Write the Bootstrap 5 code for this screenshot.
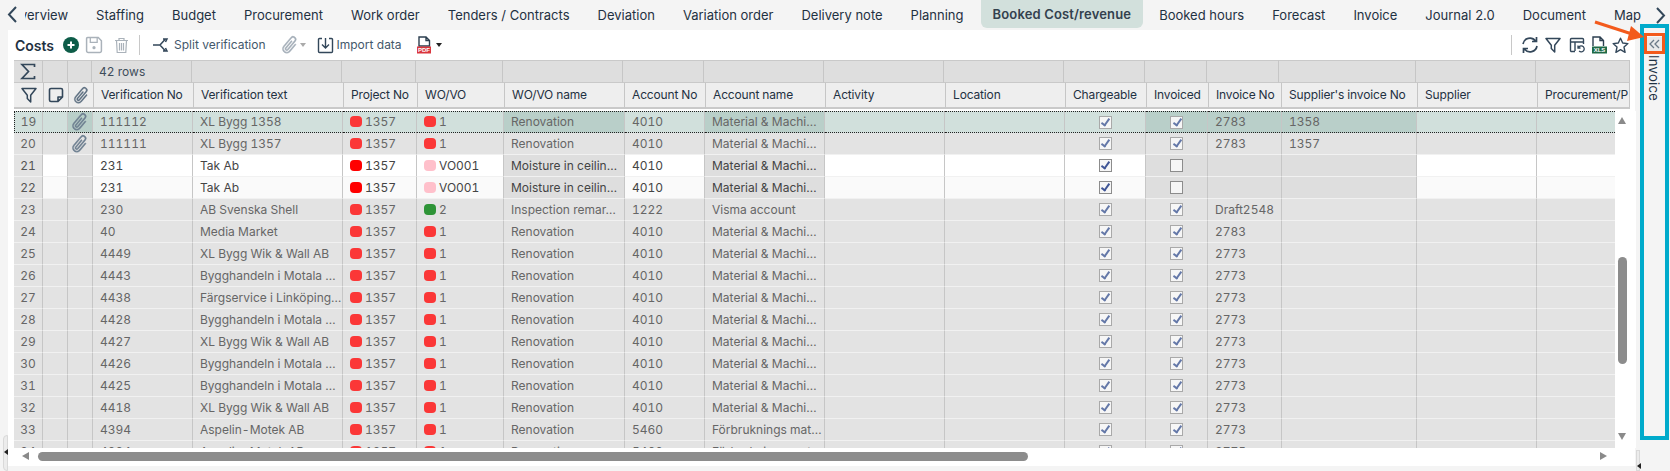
<!DOCTYPE html>
<html lang="en"><head><meta charset="utf-8"><title>Costs</title>
<link href="https://cdn.jsdelivr.net/npm/bootstrap@5.3.0/dist/css/bootstrap.min.css" rel="stylesheet">
<style>
html,body{width:1670px;height:471px;overflow:hidden;background:#f4f4f4;font-family:Inter,"Noto Sans",sans-serif;font-size:12px;color:#1f3142}
.topnav{height:30px}
.chev{width:25px;flex:none}
.navscroll{width:1627px;overflow:hidden;white-space:nowrap}
.navitem{font-size:13px;padding:0 14px;height:28px;line-height:30px;color:#1f3142;text-decoration:none;flex:none}
.navitem.first{margin-left:-29px}
.navitem.on{background:#d2e0dc;border-radius:0 0 6px 6px;font-weight:600;padding:0 12px;line-height:28px;color:#33414e;letter-spacing:.15px;margin:0 2px 0 3px}
.mainrow{height:441px}
.costpanel{width:1627px;height:436px;margin-left:8px;background:#fff;flex:none}
.tbar{height:30px;padding:0 6px 0 7px}
.tbar .ttl{font-size:14px;font-weight:600;color:#1f3142;margin-right:9px}
.tbtn{color:#43586b;font-size:12px;white-space:nowrap}
.vsep{width:1px;height:20px;background:#c8c8c8}
.caret-d{width:0;height:0;border-left:3px solid transparent;border-right:3px solid transparent;border-top:4px solid #222}
.caret-d.dim{border-top-color:#aaa}
.gap5{margin-left:5px}.gap6{margin-left:6px}.gap8{margin-left:8px}.gap10{margin-left:10px}.gap11{margin-left:11px}.gap13{margin-left:13px}.gap14{margin-left:14px}.gap19{margin-left:19px}
.gridwrap{margin-left:6px}
.dt{table-layout:fixed;border-collapse:separate;border-spacing:0;margin:0!important;color:#666}
.dt.sumt{width:1616px}.dt.hdrt{width:1616px}.dt.bodyt{width:1643px}
.dt>tbody>tr>td{padding:0 7px;white-space:nowrap;overflow:hidden;vertical-align:middle;font-size:12px;border:0;border-right:1px solid #c6c6c6;box-shadow:none;font-variant-numeric:tabular-nums}
.sumt>tbody>tr>td{height:23px;background:#dedede;border-top:1px solid #c9c9c9;border-bottom:1px solid #c9c9c9;color:#3e4d5b}
.hdrt>tbody>tr>td{height:26px;background:#eee;border-bottom:2px solid #c9c9c9;color:#1f3142;letter-spacing:-.15px}
.dt>tbody>tr>td.ic{padding:0;text-align:center;line-height:0}
.bodyclip{width:1601px;height:337px;overflow:hidden;margin-top:2px;flex:none}
.bodyt>tbody>tr>td{height:22px;border-bottom:1px solid #f1f1f1;background:#e3e3e3}
.bodyt>tbody>tr>td.num{padding:0;text-align:center;background:#e3e3e3}
.bodyt tr.sel>td{background:#d1e0dc;border-top:1px dotted #222;border-bottom:1px dotted #222}
.bodyt tr.sel>td.num{background:#d1e0dc;border-left:1px dotted #222}
.bodyt tr.sel>td.dk{background:#b9cfc9}
.bodyt tr.wh>td{background:#fff;color:#444}
.bodyt tr.off>td{background:#fafafa;color:#444}
.bodyt tr.wh>td.num,.bodyt tr.off>td.num{background:#e3e3e3;color:#555}
.bodyt tr.wh>td.dk,.bodyt tr.off>td.dk{background:#dedede}
.chip{display:inline-block;width:12px;height:11px;border-radius:4px;margin-right:3px;vertical-align:-1px;background:#fb3737}
.chip.rd{background:#f00}.chip.pk{background:#ffc0cb}.chip.gn{background:#2e9437}
.ck{display:inline-block;position:relative;width:13px;height:13px;border:1px solid #a9a9a9;background:#f6f6f6;vertical-align:middle}
.ck.on::after{content:"";position:absolute;left:3.5px;top:0;width:5px;height:9px;border-right:2px solid #6478a8;border-bottom:2px solid #6478a8;transform:rotate(35deg)}
tr.wh .ck,tr.off .ck{border-color:#8c8c8c}
tr.wh .ck.on::after,tr.off .ck.on::after{border-color:#3f5596}
.vtrack{width:21px;flex:none;height:337px;margin-top:2px;background:#fff}
.tri-u,.tri-d{width:0;height:0;border-left:4.5px solid transparent;border-right:4.5px solid transparent;margin-left:3px}
.tri-u{border-bottom:7px solid #8a8a8a;margin-top:6px}
.tri-d{border-top:7px solid #8a8a8a;margin-top:69px}
.vthumb{width:9px;height:107px;background:#8c8c8c;border-radius:5px;margin:133px 0 0 3px}
.hbar{height:16px;padding-left:8px}
.tri-l,.tri-r{width:0;height:0;border-top:4.5px solid transparent;border-bottom:4.5px solid transparent;flex:none}
.tri-l{border-right:7px solid #8a8a8a;margin-right:9px}
.tri-r{border-left:7px solid #8a8a8a;margin-left:572px}
.hthumb{width:990px;height:9px;background:#8c8c8c;border-radius:5px;flex:none}
.sidepane{width:30px;margin-left:5px;flex:none}
.collapser{width:17px;height:16px;margin:6px 0 0 6px;background:#e9e9e9;border:1px solid #f8f8f8}
.sidelabel{writing-mode:vertical-rl;font-size:13px;line-height:17px;margin:3px 0 0 5px;color:#1f3142;letter-spacing:.3px}
.hl-cyan{position:absolute;left:1640px;top:24px;width:29px;height:416px;border:4px solid #00aacb;pointer-events:none}
.hl-orange{position:absolute;left:1644px;top:33px;width:21px;height:21px;border:3px solid #f35a1c;pointer-events:none}
.hl-arrow{position:absolute;left:1590px;top:18px;width:56px;height:24px;pointer-events:none}
.grip{position:absolute;background:#ececec;border:1px solid #d9d9d9}
.grip.gl{left:3px;top:435px;width:5px;height:36px;border-radius:4px 0 0 4px}
.grip.gr{left:1636px;top:450px;width:4px;height:21px}
.grip::after{content:"";position:absolute;left:0;width:0;height:0;border-top:3px solid transparent;border-bottom:3px solid transparent;border-right:4px solid #222}
.grip.gl::after{top:13px}.grip.gr::after{top:12px}
</style></head>
<body class="position-relative">
<svg width="0" height="0" class="position-absolute">
<symbol id="clip" viewBox="0 0 16 16"><path transform="rotate(40 8 8)" fill="currentColor" stroke="currentColor" stroke-width=".3" d="M4.5 3a2.5 2.5 0 0 1 5 0v9a1.5 1.5 0 0 1-3 0V5a.5.5 0 0 1 1 0v7a.5.5 0 0 0 1 0V3a1.5 1.5 0 1 0-3 0v9a2.5 2.5 0 0 0 5 0V5a.5.5 0 0 1 1 0v7a3.5 3.5 0 1 1-7 0V3z"/></symbol>
<symbol id="fun" viewBox="0 0 16 16"><path fill="none" stroke="currentColor" stroke-width="1.5" stroke-linejoin="round" d="M1 1.5h14L9.7 8.3V15L6.3 11.5V8.3z"/></symbol>
</svg>

<nav class="topnav d-flex align-items-start">
  <div class="chev d-flex justify-content-center pt-2"><svg width="11" height="17" viewBox="0 0 11 17"><path d="M9 1 2 8.500l7 7.500" fill="none" stroke="#32475a" stroke-width="2"/></svg></div>
  <div class="navscroll d-flex">
    <a class="navitem first" href="#">Overview</a><a class="navitem" href="#">Staffing</a><a class="navitem" href="#">Budget</a><a class="navitem" href="#">Procurement</a><a class="navitem" href="#">Work order</a><a class="navitem" href="#">Tenders / Contracts</a><a class="navitem" href="#">Deviation</a><a class="navitem" href="#">Variation order</a><a class="navitem" href="#">Delivery note</a><a class="navitem" href="#">Planning</a><a class="navitem on" href="#">Booked Cost/revenue</a><a class="navitem" href="#">Booked hours</a><a class="navitem" href="#">Forecast</a><a class="navitem" href="#">Invoice</a><a class="navitem" href="#">Journal 2.0</a><a class="navitem" href="#">Document</a><a class="navitem" href="#">Map</a>
  </div>
  <div class="pt-2 ms-1"><svg width="11" height="17" viewBox="0 0 11 17"><path d="m2 1 7 7.500-7 7.500" fill="none" stroke="#32475a" stroke-width="2"/></svg></div>
</nav>

<div class="mainrow d-flex">
  <section class="costpanel d-flex flex-column">
    <div class="tbar d-flex align-items-center">
      <span class="ttl">Costs</span>
      <svg width="16" height="16" viewBox="0 0 16 16" class="me-2"><circle cx="8" cy="8" r="8" fill="#0d5c48"/><path d="M8 4.500v7M4.500 8h7" stroke="#fff" stroke-width="2"/></svg>
      <svg width="18" height="18" viewBox="0 0 17 17"><path d="M2.500 1.500h10l3 3v9.500a1.500 1.500 0 0 1-1.500 1.500H3a1.500 1.500 0 0 1-1.500-1.500V2.500a1 1 0 0 1 1-1z" fill="none" stroke="#aab2ba" stroke-width="1.400"/><path d="M5 2v4h6.500V2" fill="none" stroke="#aab2ba" stroke-width="1.200"/><circle cx="8.500" cy="11" r="1.500" fill="#aab2ba"/></svg>
      <svg width="15" height="17" viewBox="0 0 15 17" class="gap11"><path d="M1 3.500h13M5 3.500V1.500h5v2M2.500 3.500l.7 12h8.600l.7-12M5.500 6v7.500M7.500 6v7.500M9.500 6v7.500" fill="none" stroke="#aab2ba" stroke-width="1.200"/></svg>
      <span class="vsep gap10"></span>
      <svg width="18" height="16" viewBox="0 0 18 16" class="gap13"><path d="M0 8h7M7 8l5-5.500M7 8l5 5.500M10 2h4l-1.500 3M10 14h4l-1.500-3" fill="none" stroke="#33475a" stroke-width="1.500"/></svg>
      <span class="tbtn ms-1">Split verification</span>
      <svg width="20" height="20" class="gap14" color="#a5afb9"><use href="#clip"/></svg>
      <span class="caret-d dim me-2"></span>
      <svg width="17" height="17" viewBox="0 0 17 17" class="gap5"><path d="M5 1.500H2.500a1 1 0 0 0-1 1v12a1 1 0 0 0 1 1h12a1 1 0 0 0 1-1v-12a1 1 0 0 0-1-1H12" fill="none" stroke="#33475a" stroke-width="1.400"/><path d="M8.500 1v9.500M5 7.500l3.500 3.500L12 7.500" fill="none" stroke="#33475a" stroke-width="1.400"/></svg>
      <span class="tbtn ms-1">Import data</span>
      <svg width="17" height="18" viewBox="0 0 17 18" class="gap14" font-family="Liberation Sans,sans-serif"><path d="M3 1h7l3.500 3.500V10H3zM10 1v3.500h3.500" fill="none" stroke="#2c3f50" stroke-width="1.400"/><rect x="1" y="10.500" width="14" height="7" fill="#d9363e"/><text x="8" y="16.300" font-size="6" font-weight="700" fill="#fff" text-anchor="middle">PDF</text></svg>
      <span class="caret-d ms-1"></span>
      <span class="vsep ms-auto me-2"></span>
      <svg width="18" height="18" viewBox="0 0 18 18" class="ms-1"><path d="M2 8a7 7 0 0 1 12.500-3M16 10a7 7 0 0 1-12.500 3M15.500 1v4.500H11M2.500 17v-4.500H7" fill="none" stroke="#33475a" stroke-width="1.700"/></svg>
      <svg width="16" height="16" class="gap6" color="#33475a"><use href="#fun"/></svg>
      <svg width="16" height="16" viewBox="0 0 16 16" class="gap8"><path d="M6 14.500H2.500a1 1 0 0 1-1-1v-11a1 1 0 0 1 1-1h11a1 1 0 0 1 1 1V7M1.500 5h13M6 5v9" fill="none" stroke="#33475a" stroke-width="1.400"/><path d="M9 8.500v2.500h2.500M9.300 11a3 3 0 1 1 .8 3" fill="none" stroke="#33475a" stroke-width="1.300"/></svg>
      <svg width="16" height="18" viewBox="0 0 16 18" class="gap6" font-family="Liberation Sans,sans-serif"><path d="M2 10V1h7l3.500 3.500V10M9 1v3.500h3.500" fill="none" stroke="#2c3f50" stroke-width="1.400"/><rect x="1" y="10.500" width="15" height="7" fill="#1f6a47"/><text x="8.500" y="16.300" font-size="6" font-weight="700" fill="#fff" text-anchor="middle">XLS</text></svg>
      <svg width="17" height="17" viewBox="0 0 17 17" class="gap5"><path d="m8.500 1.200 2.200 4.800 5.200.6-3.900 3.500 1.100 5.200-4.600-2.700-4.600 2.700 1.100-5.200L1.100 6.600l5.200-.6z" fill="none" stroke="#33475a" stroke-width="1.400" stroke-linejoin="round"/></svg>
    </div>
    <div class="gridwrap flex-fill d-flex flex-column">
      <table class="table dt sumt"><colgroup><col width="29"><col width="25"><col width="24"><col width="100"><col width="150"><col width="74"><col width="87"><col width="120"><col width="81"><col width="120"><col width="120"><col width="120"><col width="81"><col width="62"><col width="72"><col width="137"><col width="120"><col width="94"></colgroup><tbody><tr>
        <td class="ic"><svg width="16" height="17" viewBox="0 0 16 17"><path d="M14.500 4V1.500H2L8.500 8.500 2 15.500h12.500V13" fill="none" stroke="#33475a" stroke-width="1.700"/></svg></td><td></td><td></td><td>42 rows</td><td></td><td></td><td></td><td></td><td></td><td></td><td></td><td></td><td></td><td></td><td></td><td></td><td></td><td></td>
      </tr></tbody></table>
      <table class="table dt hdrt"><colgroup><col width="30"><col width="25"><col width="25"><col width="100"><col width="150"><col width="74"><col width="87"><col width="120"><col width="81"><col width="120"><col width="120"><col width="120"><col width="81"><col width="62"><col width="73"><col width="136"><col width="120"><col width="92"></colgroup><tbody><tr>
        <td class="ic"><svg width="16" height="16" color="#33475a"><use href="#fun"/></svg></td>
        <td class="ic"><svg width="16" height="16" viewBox="0 0 16 16"><path d="M10 14.500H3a1.500 1.500 0 0 1-1.500-1.500V3A1.500 1.500 0 0 1 3 1.500h10A1.500 1.500 0 0 1 14.500 3v7zM10 14.500V10h4.500" fill="none" stroke="#33475a" stroke-width="1.600" stroke-linejoin="round"/></svg></td>
        <td class="ic"><svg width="19" height="19" color="#5a6d7f"><use href="#clip"/></svg></td>
        <td>Verification No</td><td>Verification text</td><td>Project No</td><td>WO/VO</td><td>WO/VO name</td><td>Account No</td><td>Account name</td><td>Activity</td><td>Location</td><td>Chargeable</td><td>Invoiced</td><td>Invoice No</td><td>Supplier's invoice No</td><td>Supplier</td><td>Procurement/P</td>
      </tr></tbody></table>
      <div class="d-flex">
        <div class="bodyclip">
          <table class="table dt bodyt"><colgroup><col width="29"><col width="25"><col width="25"><col width="100"><col width="150"><col width="74"><col width="87"><col width="121"><col width="80"><col width="120"><col width="120"><col width="120"><col width="81"><col width="62"><col width="74"><col width="135"><col width="120"><col width="120"></colgroup><tbody>
<tr class="sel"><td class="num">19</td><td></td><td class="ic dk"><svg width="20" height="20" color="#6d7f90"><use href="#clip"/></svg></td><td>111112</td><td>XL Bygg 1358</td><td><i class="chip"></i>1357</td><td><i class="chip"></i>1</td><td class="dk">Renovation</td><td>4010</td><td class="dk">Material &amp; Machi…</td><td></td><td></td><td class="ic"><span class="ck on"></span></td><td class="ic dk"><span class="ck on"></span></td><td class="dk">2783</td><td class="dk">1358</td><td></td><td></td></tr>
<tr><td class="num">20</td><td></td><td class="ic"><svg width="20" height="20" color="#6d7f90"><use href="#clip"/></svg></td><td>111111</td><td>XL Bygg 1357</td><td><i class="chip"></i>1357</td><td><i class="chip"></i>1</td><td>Renovation</td><td>4010</td><td>Material &amp; Machi…</td><td></td><td></td><td class="ic"><span class="ck on"></span></td><td class="ic"><span class="ck on"></span></td><td>2783</td><td>1357</td><td></td><td></td></tr>
<tr class="wh"><td class="num">21</td><td></td><td class="dk"></td><td>231</td><td>Tak Ab</td><td><i class="chip rd"></i>1357</td><td><i class="chip pk"></i>VO001</td><td class="dk">Moisture in ceilin…</td><td>4010</td><td class="dk">Material &amp; Machi…</td><td></td><td></td><td class="ic"><span class="ck on"></span></td><td class="ic dk"><span class="ck"></span></td><td class="dk"></td><td class="dk"></td><td></td><td></td></tr>
<tr class="off"><td class="num">22</td><td></td><td class="dk"></td><td>231</td><td>Tak Ab</td><td><i class="chip rd"></i>1357</td><td><i class="chip pk"></i>VO001</td><td class="dk">Moisture in ceilin…</td><td>4010</td><td class="dk">Material &amp; Machi…</td><td></td><td></td><td class="ic"><span class="ck on"></span></td><td class="ic dk"><span class="ck"></span></td><td class="dk"></td><td class="dk"></td><td></td><td></td></tr>
<tr><td class="num">23</td><td></td><td></td><td>230</td><td>AB Svenska Shell</td><td><i class="chip"></i>1357</td><td><i class="chip gn"></i>2</td><td>Inspection remar…</td><td>1222</td><td>Visma account</td><td></td><td></td><td class="ic"><span class="ck on"></span></td><td class="ic"><span class="ck on"></span></td><td>Draft2548</td><td></td><td></td><td></td></tr>
<tr><td class="num">24</td><td></td><td></td><td>40</td><td>Media Market</td><td><i class="chip"></i>1357</td><td><i class="chip"></i>1</td><td>Renovation</td><td>4010</td><td>Material &amp; Machi…</td><td></td><td></td><td class="ic"><span class="ck on"></span></td><td class="ic"><span class="ck on"></span></td><td>2783</td><td></td><td></td><td></td></tr>
<tr><td class="num">25</td><td></td><td></td><td>4449</td><td>XL Bygg Wik &amp; Wall AB</td><td><i class="chip"></i>1357</td><td><i class="chip"></i>1</td><td>Renovation</td><td>4010</td><td>Material &amp; Machi…</td><td></td><td></td><td class="ic"><span class="ck on"></span></td><td class="ic"><span class="ck on"></span></td><td>2773</td><td></td><td></td><td></td></tr>
<tr><td class="num">26</td><td></td><td></td><td>4443</td><td>Bygghandeln i Motala …</td><td><i class="chip"></i>1357</td><td><i class="chip"></i>1</td><td>Renovation</td><td>4010</td><td>Material &amp; Machi…</td><td></td><td></td><td class="ic"><span class="ck on"></span></td><td class="ic"><span class="ck on"></span></td><td>2773</td><td></td><td></td><td></td></tr>
<tr><td class="num">27</td><td></td><td></td><td>4438</td><td>Färgservice i Linköping…</td><td><i class="chip"></i>1357</td><td><i class="chip"></i>1</td><td>Renovation</td><td>4010</td><td>Material &amp; Machi…</td><td></td><td></td><td class="ic"><span class="ck on"></span></td><td class="ic"><span class="ck on"></span></td><td>2773</td><td></td><td></td><td></td></tr>
<tr><td class="num">28</td><td></td><td></td><td>4428</td><td>Bygghandeln i Motala …</td><td><i class="chip"></i>1357</td><td><i class="chip"></i>1</td><td>Renovation</td><td>4010</td><td>Material &amp; Machi…</td><td></td><td></td><td class="ic"><span class="ck on"></span></td><td class="ic"><span class="ck on"></span></td><td>2773</td><td></td><td></td><td></td></tr>
<tr><td class="num">29</td><td></td><td></td><td>4427</td><td>XL Bygg Wik &amp; Wall AB</td><td><i class="chip"></i>1357</td><td><i class="chip"></i>1</td><td>Renovation</td><td>4010</td><td>Material &amp; Machi…</td><td></td><td></td><td class="ic"><span class="ck on"></span></td><td class="ic"><span class="ck on"></span></td><td>2773</td><td></td><td></td><td></td></tr>
<tr><td class="num">30</td><td></td><td></td><td>4426</td><td>Bygghandeln i Motala …</td><td><i class="chip"></i>1357</td><td><i class="chip"></i>1</td><td>Renovation</td><td>4010</td><td>Material &amp; Machi…</td><td></td><td></td><td class="ic"><span class="ck on"></span></td><td class="ic"><span class="ck on"></span></td><td>2773</td><td></td><td></td><td></td></tr>
<tr><td class="num">31</td><td></td><td></td><td>4425</td><td>Bygghandeln i Motala …</td><td><i class="chip"></i>1357</td><td><i class="chip"></i>1</td><td>Renovation</td><td>4010</td><td>Material &amp; Machi…</td><td></td><td></td><td class="ic"><span class="ck on"></span></td><td class="ic"><span class="ck on"></span></td><td>2773</td><td></td><td></td><td></td></tr>
<tr><td class="num">32</td><td></td><td></td><td>4418</td><td>XL Bygg Wik &amp; Wall AB</td><td><i class="chip"></i>1357</td><td><i class="chip"></i>1</td><td>Renovation</td><td>4010</td><td>Material &amp; Machi…</td><td></td><td></td><td class="ic"><span class="ck on"></span></td><td class="ic"><span class="ck on"></span></td><td>2773</td><td></td><td></td><td></td></tr>
<tr><td class="num">33</td><td></td><td></td><td>4394</td><td>Aspelin-Motek AB</td><td><i class="chip"></i>1357</td><td><i class="chip"></i>1</td><td>Renovation</td><td>5460</td><td>Förbruknings mat…</td><td></td><td></td><td class="ic"><span class="ck on"></span></td><td class="ic"><span class="ck on"></span></td><td>2773</td><td></td><td></td><td></td></tr>
<tr><td class="num">34</td><td></td><td></td><td>4394</td><td>Aspelin-Motek AB</td><td><i class="chip"></i>1357</td><td><i class="chip"></i>1</td><td>Renovation</td><td>5460</td><td>Förbruknings mat…</td><td></td><td></td><td class="ic"><span class="ck on"></span></td><td class="ic"><span class="ck on"></span></td><td>2775</td><td></td><td></td><td></td></tr>
          </tbody></table>
        </div>
        <div class="vtrack d-flex flex-column">
          <div class="tri-u"></div><div class="vthumb"></div><div class="tri-d"></div>
        </div>
      </div>
      <div class="hbar d-flex align-items-center">
        <div class="tri-l"></div><div class="hthumb"></div><div class="tri-r"></div>
      </div>
    </div>
  </section>
  <aside class="sidepane">
    <div class="collapser d-flex align-items-center justify-content-center"><svg width="11" height="10" viewBox="0 0 11 10"><path d="M5 1 1 5l4 4M10 1 6 5l4 4" fill="none" stroke="#6c7a87" stroke-width="1.300"/></svg></div>
    <div class="sidelabel">Invoice</div>
  </aside>
</div>

<div class="grip gl"></div><div class="grip gr"></div>
<div class="hl-cyan"></div>
<div class="hl-orange"></div>
<svg class="hl-arrow" viewBox="0 0 56 24"><path d="M5 4 42 16" stroke="#f35a1c" stroke-width="3"/><path d="M54 19 37 23l4-15z" fill="#f35a1c"/></svg>
<script src="https://cdn.jsdelivr.net/npm/bootstrap@5.3.0/dist/js/bootstrap.bundle.min.js"></script>
</body></html>
